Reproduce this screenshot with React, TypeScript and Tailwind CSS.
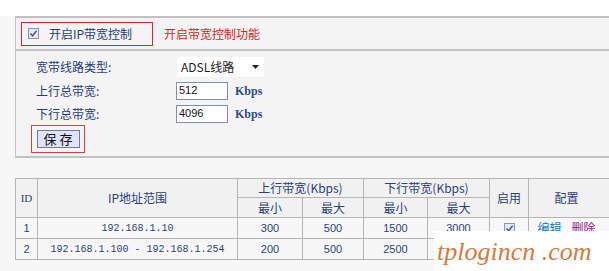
import React from "react";

const cjk = "font-['SimSun','Noto_Sans_CJK_SC',sans-serif]";

function CheckBox() {
  return (
    <span className="inline-flex h-[11px] w-[11px] items-center justify-center border border-[#8a93b0] bg-[#e4e8f4]">
      <svg width="9" height="9" viewBox="0 0 9 9">
        <path d="M1.5 4.5 L3.6 6.8 L7.6 1.8" fill="none" stroke="#4a5a8c" strokeWidth="1.5" />
      </svg>
    </span>
  );
}

const th = "border border-[#b5b5b5] bg-[#f1f1f1] text-center font-normal text-[#2b3f7c]";
const td = "border border-[#b5b5b5] text-center text-[#2b3f7c]";

export default function App() {
  return (
    <div className={`relative h-[271px] w-[609px] overflow-hidden bg-[#f7f7f7] text-[12px] ${cjk}`}>
      <div className="h-[16px] bg-white" />
      <div className="ml-[15px] border-t-2 border-l border-[#c2c2c2] bg-[#f4f4f4]">
        <div className="flex h-[31px] items-center pl-[5px]">
          <div className="flex h-[24px] w-[132px] items-center gap-[10px] border border-[#e02424] pl-[6px]">
            <CheckBox />
            <span className="text-[#263c7c]">开启IP带宽控制</span>
          </div>
          <span className="ml-[11px] text-[#e0201c]">开启带宽控制功能</span>
        </div>
        <div className="h-[2px] border-t-2 border-[#c2c2c2]" />
        <div className="flex h-[105px] flex-col pl-[20px] pt-[5px] text-[#263c7c]">
          <div className="flex h-[22px] items-center">
            <span className="w-[141px]">宽带线路类型:</span>
            <div className="flex h-[20px] w-[87px] items-center justify-between bg-white pl-[4px] pr-[5px] text-[#222]">
              <span>ADSL线路</span>
              <svg width="7" height="4" viewBox="0 0 7 4">
                <path d="M0 0 L7 0 L3.5 4 Z" fill="#222" />
              </svg>
            </div>
          </div>
          <div className="mt-[2px] flex h-[21px] items-center">
            <span className="w-[140px]">上行总带宽:</span>
            <div className="flex h-[18px] w-[52px] items-center border border-[#7f8fb9] bg-white pl-[2px] font-['Liberation_Sans',sans-serif] text-[11px] text-[#111]">
              512
            </div>
            <span className="ml-[7px] font-['Liberation_Serif',serif] text-[12px] font-bold text-[#2b4a8c]">Kbps</span>
          </div>
          <div className="mt-[2px] flex h-[21px] items-center">
            <span className="w-[140px]">下行总带宽:</span>
            <div className="flex h-[18px] w-[52px] items-center border border-[#7f8fb9] bg-white pl-[2px] font-['Liberation_Sans',sans-serif] text-[11px] text-[#111]">
              4096
            </div>
            <span className="ml-[7px] font-['Liberation_Serif',serif] text-[12px] font-bold text-[#2b4a8c]">Kbps</span>
          </div>
          <div className="-ml-[5px] mt-[1px] flex h-[28px] w-[54px] items-center justify-center border border-[#d84040]">
            <button className="flex h-[18px] w-[43px] items-center justify-center border border-[#6e7aa8] bg-[#dfe4fa] text-[13px] text-[#111]">
              保&nbsp;存
            </button>
          </div>
        </div>
        <div className="border-t-2 border-[#c2c2c2]" />
      </div>

      <table className="ml-[15px] mt-[20px] w-[610px] table-fixed border-collapse">
        <colgroup>
          <col className="w-[22px]" />
          <col className="w-[200px]" />
          <col className="w-[65px]" />
          <col className="w-[61px]" />
          <col className="w-[64px]" />
          <col className="w-[62px]" />
          <col className="w-[39px]" />
          <col />
        </colgroup>
        <thead>
          <tr className="h-[19px]">
            <th rowSpan={2} className={`${th} font-['Liberation_Serif',serif] text-[11px]`}>ID</th>
            <th rowSpan={2} className={th}>IP地址范围</th>
            <th colSpan={2} className={th}>上行带宽(Kbps)</th>
            <th colSpan={2} className={th}>下行带宽(Kbps)</th>
            <th rowSpan={2} className={th}>启用</th>
            <th rowSpan={2} className={`${th} pr-[20px]`}>配置</th>
          </tr>
          <tr className="h-[20px]">
            <th className={th}>最小</th>
            <th className={th}>最大</th>
            <th className={th}>最小</th>
            <th className={th}>最大</th>
          </tr>
        </thead>
        <tbody className="font-['Liberation_Sans',sans-serif] text-[11px]">
          <tr className="h-[21px]">
            <td className={td}>1</td>
            <td className={`${td} font-['Liberation_Mono',monospace] text-[10px]`}>192.168.1.10</td>
            <td className={td}>300</td>
            <td className={td}>500</td>
            <td className={td}>1500</td>
            <td className={td}>3000</td>
            <td className={td}>
              <span className="inline-flex align-middle">
                <CheckBox />
              </span>
            </td>
            <td className={`${td} ${cjk} whitespace-nowrap pr-[20px] text-[12px]`}>
              <span className="text-[#1f78c8]">编辑</span>
              <span className="ml-[10px] text-[#a0208c]">删除</span>
            </td>
          </tr>
          <tr className="h-[21px]">
            <td className={td}>2</td>
            <td className={`${td} font-['Liberation_Mono',monospace] text-[10px]`}>192.168.1.100 - 192.168.1.254</td>
            <td className={td}>200</td>
            <td className={td}>500</td>
            <td className={td}>2500</td>
            <td className={td}></td>
            <td className={td}></td>
            <td className={td}></td>
          </tr>
        </tbody>
      </table>

      <div className="absolute left-[434px] top-[231px] flex h-[40px] w-[175px] items-center whitespace-nowrap bg-white pl-[3px] font-['Liberation_Serif',serif] text-[26px] italic text-[#d8793c]">
        tplogincn .com
      </div>
    </div>
  );
}
